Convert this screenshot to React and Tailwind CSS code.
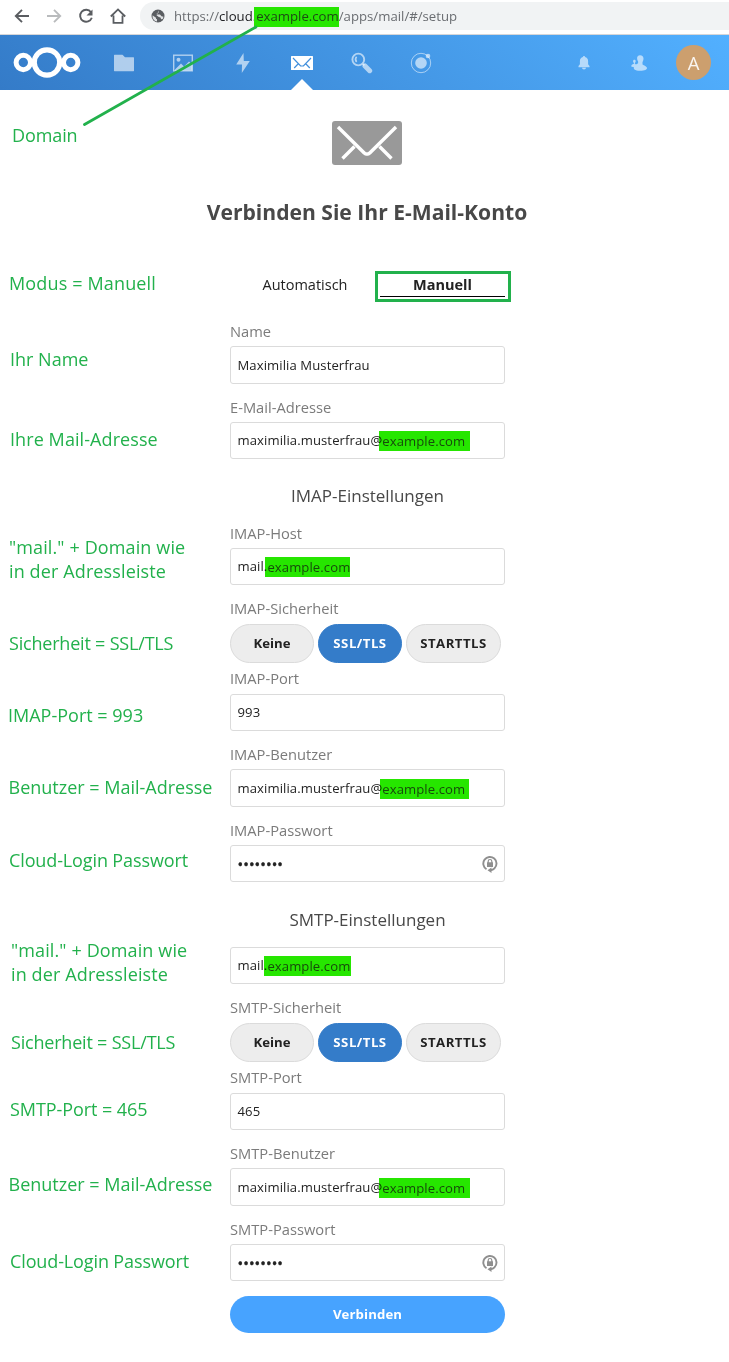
import React from "react";

const notes = [
  { text: ["Domain"], cls: "mt-[33px] pl-3 tracking-[-0.100px]" },
  { text: ["Modus = Manuell"], cls: "mt-[124px] pl-[9px] tracking-[0.150px]" },
  { text: ["Ihr Name"], cls: "mt-[52px] pl-[10px]" },
  { text: ["Ihre Mail-Adresse"], cls: "mt-14 pl-[10px] tracking-[0.080px]" },
  { text: ['"mail." + Domain wie', "in der Adressleiste"], cls: "mt-[84px] pl-[9px] tracking-[0.120px]" },
  { text: ["Sicherheit = SSL/TLS"], cls: "mt-12 pl-[9px] tracking-[-0.200px]" },
  { text: ["IMAP-Port = 993"], cls: "mt-12 pl-2" },
  { text: ["Benutzer = Mail-Adresse"], cls: "mt-12 pl-[8.500px]" },
  { text: ["Cloud-Login Passwort"], cls: "mt-[49px] pl-[9px] tracking-[-0.120px]" },
  { text: ['"mail." + Domain wie', "in der Adressleiste"], cls: "mt-[66px] pl-[11px] tracking-[0.120px]" },
  { text: ["Sicherheit = SSL/TLS"], cls: "mt-11 pl-[11px] tracking-[-0.200px]" },
  { text: ["SMTP-Port = 465"], cls: "mt-[43px] pl-[10px] tracking-[-0.080px]" },
  { text: ["Benutzer = Mail-Adresse"], cls: "mt-[51px] pl-[8.500px]" },
  { text: ["Cloud-Login Passwort"], cls: "mt-[53px] pl-[10px] tracking-[-0.120px]" },
];

function Chrome() {
  return (
    <div className="flex h-[35px] items-start border-b border-[#d6d6d8] bg-white pt-[2px]">
      <svg className="h-7 w-[140px] shrink-0" viewBox="0 2 140 28" fill="none">
        <path d="M29 16H16M22 9.800 15.800 16l6.200 6.200" stroke="#5a5d61" strokeWidth="1.900" />
        <path d="M47 16h13M54 9.800 60.200 16 54 22.200" stroke="#b9bbbd" strokeWidth="1.900" />
        <path d="M91 12.200a6 6 0 1 0 .8 5.600" stroke="#5a5d61" strokeWidth="1.900" />
        <path d="M92.500 9.500v6h-6z" fill="#5a5d61" />
        <path d="M113.500 15.500v7.400h9v-7.400M110.800 16.500 118 9.400l7.200 7.100" stroke="#5a5d61" strokeWidth="1.800" />
      </svg>
      <div className="flex h-7 flex-1 items-center rounded-l-full bg-[#f1f3f4] pl-[11px]">
        <svg className="mr-[9px] h-[14px] w-[14px]" viewBox="0 0 14 14">
          <circle cx="7" cy="7" r="6.500" fill="#5a5d61" />
          <path d="M1.800 6.500 5 8.800v1l1 .4v2.300A5.500 5.500 0 0 1 1.500 6.500zM8 1.600l-.2 1.800-2 .6.200 1.500h3l1.500 1.800 2 .4-.8 2.300-1.600.2-.6-1.700-1.700-.6L5.500 6.300" fill="#dfe1e3" />
        </svg>
        <div className="flex items-center whitespace-pre text-[13.200px] leading-5 text-[#6a6d71]">
          <span>https://</span>
          <span className="text-[#202124]">cloud.</span>
          <span className="-ml-[2px] mt-[2px] h-5 bg-[#26e600] pl-[2px] leading-[18px] text-[#1d4a14]">example.com</span>
          <span>/apps/mail/#/setup</span>
        </div>
      </div>
    </div>
  );
}

function Slot({ children }) {
  return <div className="flex h-[55px] w-[59.500px] items-center justify-center text-white/60">{children}</div>;
}

function NavBar() {
  return (
    <nav className="flex h-[55px] bg-[linear-gradient(40deg,#347bc8_0%,#52b0ff_100%)]">
      <div className="flex w-[94px] items-center pl-[13px]">
        <svg className="h-[31px] w-[68px]" viewBox="0 0 68 31" fill="none" stroke="#fff">
          <circle cx="34" cy="15.500" r="12.700" strokeWidth="5.200" />
          <circle cx="10.300" cy="15.500" r="7.200" strokeWidth="5" />
          <circle cx="57.700" cy="15.500" r="7.200" strokeWidth="5" />
        </svg>
      </div>
      <Slot>
        <svg className="h-5 w-5" viewBox="0 0 20 20" fill="currentColor">
          <path d="M.5 1.800h8L11 4.200h8.500c.3 0 .5.200.5.500v13c0 .3-.2.500-.5.500H.5c-.3 0-.5-.2-.5-.5V2.300c0-.3.200-.5.500-.5z" />
        </svg>
      </Slot>
      <Slot>
        <svg className="h-5 w-5" viewBox="0 0 20 20">
          <rect x=".7" y="2.200" width="18.600" height="15.600" stroke="currentColor" strokeWidth="1.400" fill="none" />
          <circle cx="5.500" cy="6.800" r="2" fill="currentColor" />
          <path d="M2 16.500 8 10.500l3 3 5-5 3 3v6H2z" fill="currentColor" />
        </svg>
      </Slot>
      <Slot>
        <svg className="h-5 w-5" viewBox="0 0 20 20" fill="currentColor">
          <path d="M10.500 0 3.200 11.500H9L8.800 20l8-12h-6z" />
        </svg>
      </Slot>
      <div className="flex h-[55px] w-[59.500px] flex-col items-center pr-[1.500px]">
        <svg className="mt-[21px] h-[14px] w-[22px]" viewBox="0 0 22 14" fill="none">
          <rect width="22" height="14" rx=".5" fill="#fff" />
          <path d="m2 2 7.600 8h2.800L20 2M3.200 12l4.300-4.500M18.800 12l-4.300-4.500" stroke="#418fdc" strokeWidth="1.200" />
        </svg>
        <svg className="mt-[9px] h-[11px] w-[22px]" viewBox="0 0 22 11" fill="#fff">
          <path d="M0 11 11 0l11 11z" />
        </svg>
      </div>
      <Slot>
        <svg className="h-[22px] w-[22px]" viewBox="0 0 22 22" fill="none">
          <circle cx="7.300" cy="7.500" r="5.900" strokeWidth="1.900" stroke="currentColor" />
          <path d="M5.600 4.800a4 4 0 0 0 0 5.200" strokeWidth="1.600" stroke="currentColor" />
          <path d="m14 14 4.700 4.700" strokeWidth="5" strokeLinecap="round" stroke="currentColor" />
          <path d="m11.800 11.800 1.500 1.500" strokeWidth="1.900" stroke="currentColor" />
        </svg>
      </Slot>
      <Slot>
        <svg className="-ml-px h-[22px] w-[22px]" viewBox="0 0 22 22">
          <circle cx="11" cy="11" r="9.700" fill="none" stroke="currentColor" strokeWidth=".9" />
          <circle cx="11" cy="11" r="5.800" fill="currentColor" />
          <circle cx="18" cy="4" r="2.300" fill="currentColor" />
        </svg>
      </Slot>
      <div className="ml-[105px] flex">
        <div className="flex w-[55px] items-center justify-center text-white/60">
          <svg className="h-4 w-4" viewBox="0 0 16 16" fill="currentColor">
            <path d="M8 1c-.6 0-1 .4-1 1C5 2.500 3.900 4 3.900 6v3.200L2.500 11v1.200h11V11l-1.400-1.800V6C12.100 4 11 2.500 9 2c0-.6-.4-1-1-1zM6 12.800a2 1.800 0 0 0 4 0z" />
          </svg>
        </div>
        <div className="flex w-[55px] items-center justify-center text-white/60">
          <svg className="h-4 w-4" viewBox="0 0 16 16" fill="currentColor">
            <path d="M9 .3C7 .3 5.900 1.800 6.100 3.600c.1 1.500.6 2.400 1 3v1.600c-.5.500-1.500.8-2.500 1.400L4.500 9l-.7-.3L4 7.800c.9-.6 1.200-3-.6-3s-1.500 2.400-.6 3l.2.900c-1 .4-2.600.8-2.600 1.800v1.200l2.400.3C2.400 14 3.600 15.800 9 15.800c5 0 7-1.200 7-2.700 0-1.900-3.200-2.700-4.500-3.700V7c.4-.6.900-1.700 1-3.200C12.700 2 11.200.3 9 .3z" />
          </svg>
        </div>
        <div className="flex w-[55px] items-center justify-center">
          <div className="flex h-[35px] w-[35px] items-center justify-center rounded-full bg-[#cc9f6e] text-[18.500px] text-white/90">A</div>
        </div>
      </div>
    </nav>
  );
}

function Label({ className = "mt-3.5", children }) {
  return <div className={`h-5 text-[14.700px] leading-[18px] text-[#7b7b7b] ${className}`}>{children}</div>;
}

function Field({ className = "mt-1 h-[37px]", children }) {
  return (
    <div className={`flex items-center whitespace-pre rounded-[3px] border border-[#dbdbdb] bg-white px-[6.500px] pt-px text-[13.100px] tracking-[0.090px] text-[#222] ${className}`}>
      {children}
    </div>
  );
}

function Mark({ className, children }) {
  return <span className={`h-5 bg-[#26e600] leading-5 text-[#17490b] mix-blend-multiply ${className}`}>{children}</span>;
}

function Password() {
  return (
    <Field>
      <span className="flex-1 text-[15px] tracking-[0.050px] [-webkit-text-stroke:0.400px_#222]">••••••••</span>
      <svg className="h-[18px] w-4" viewBox="0 0 16 18" fill="none">
        <path d="M4.500 14.200A6.600 6.600 0 1 1 12.500 13.300Q11 15 8.500 15.200" stroke="#8f8f8f" strokeWidth="1.900" />
        <path d="m9.500 12.500-4 2.700 4 2.800z" fill="#8f8f8f" />
        <rect x="5" y="7.300" width="6" height="4.700" fill="#8f8f8f" />
        <path d="M6.200 8V6.300a1.800 1.800 0 0 1 3.600 0V8" stroke="#8f8f8f" strokeWidth="1.200" />
      </svg>
    </Field>
  );
}

function Security() {
  const base = "flex h-[39px] items-center justify-center rounded-full border text-[13.200px] font-bold";
  return (
    <div className="mt-[5px] flex gap-1">
      <div className={`${base} w-[84px] border-[#dbdbdb] bg-[#ededed] text-[#222]`}>Keine</div>
      <div className={`${base} w-[84px] border-[#347cc9] bg-[#347cc9] tracking-[0.500px] text-white`}>SSL/TLS</div>
      <div className={`${base} w-[95px] border-[#dbdbdb] bg-[#ededed] tracking-[0.500px] text-[#222]`}>STARTTLS</div>
    </div>
  );
}

function Section({ className, children }) {
  return <h3 className={`h-6 text-center text-[17px] leading-6 text-[#484848] ${className}`}>{children}</h3>;
}

export default function App() {
  return (
    <div className="relative h-[1362px] w-[729px] overflow-hidden bg-white font-['Open_Sans',sans-serif]">
      <Chrome />
      <NavBar />
      <div className="flex">
        <aside className="w-[230px] shrink-0 whitespace-pre text-[18px] leading-6 text-[#22b14c]">
          {notes.map((n, i) => (
            <div key={i} className={n.cls}>
              {n.text.map((t) => (
                <div key={t}>{t}</div>
              ))}
            </div>
          ))}
        </aside>
        <main className="flex w-[275px] flex-col">
          <svg className="mr-px mt-[31px] h-[45px] w-[70px] self-center" viewBox="0 0 70 45" fill="none">
            <rect y="0" width="70" height="44" rx="3" fill="#999" />
            <path d="M6 6 32 31.800Q33.200 33 34 33h2Q36.800 33 38 31.800L64 6M10.500 37.500 22.500 25.500M59.500 37.500 47.500 25.500" stroke="#fff" strokeWidth="3.400" />
          </svg>
          <h2 className="-mx-10 mt-8 h-7 whitespace-nowrap pr-px text-center text-[21.100px] font-bold leading-7 text-[#484848]">
            Verbinden Sie Ihr E-Mail-Konto
          </h2>
          <div className="-mr-1.5 mt-[45px] flex h-[31px] text-[14.500px] leading-[22px] text-[#222]">
            <div className="w-[145px] pl-[5px] pt-[3px] text-center">Automatisch</div>
            <div className="w-[136px] border-[3px] border-[#22b14c] pl-[2px] pr-[3px]">
              <div className="h-[23px] border-b border-black text-center font-bold">Manuell</div>
            </div>
          </div>
          <Label className="mt-5">Name</Label>
          <Field className="mt-1 h-[38px]">Maximilia Musterfrau</Field>
          <Label>E-Mail-Adresse</Label>
          <Field>
            maximilia.musterfrau@<Mark className="-ml-[3px] pl-[3px] pr-[5px]">example.com</Mark>
          </Field>
          <Section className="mt-[25px]">IMAP-Einstellungen</Section>
          <Label className="mt-4">IMAP-Host</Label>
          <Field>
            mail.<Mark className="-ml-[2px] pl-[2px]">example.com</Mark>
          </Field>
          <Label>IMAP-Sicherheit</Label>
          <Security />
          <Label className="mt-1.5">IMAP-Port</Label>
          <Field className="mt-[5px] h-[37px]">993</Field>
          <Label>IMAP-Benutzer</Label>
          <Field className="mt-1 h-[38px]">
            maximilia.musterfrau@<Mark className="-ml-[2px] pl-[2px] pr-1">example.com</Mark>
          </Field>
          <Label>IMAP-Passwort</Label>
          <Password />
          <Section className="mt-[26px]">SMTP-Einstellungen</Section>
          <Field className="mt-[15px] h-[37px]">
            mail.<Mark className="-ml-[3px] pl-[3px] pr-px">example.com</Mark>
          </Field>
          <Label>SMTP-Sicherheit</Label>
          <Security />
          <Label className="mt-1.5">SMTP-Port</Label>
          <Field className="mt-[5px] h-[37px]">465</Field>
          <Label>SMTP-Benutzer</Label>
          <Field className="mt-1 h-[38px]">
            maximilia.musterfrau@<Mark className="-ml-[3px] pl-[3px] pr-[5px]">example.com</Mark>
          </Field>
          <Label>SMTP-Passwort</Label>
          <Password />
          <div className="mt-[15px] flex h-[37px] items-center justify-center rounded-full bg-[#47a3ff] pt-px text-[13.200px] font-bold tracking-[0.100px] text-white">
            Verbinden
          </div>
        </main>
      </div>
      <svg className="absolute left-0 top-0 h-[140px] w-[300px]" viewBox="0 0 300 140">
        <path d="M84.500 124.500 256 27" stroke="#22b14c" strokeWidth="2.800" strokeLinecap="round" />
      </svg>
    </div>
  );
}
